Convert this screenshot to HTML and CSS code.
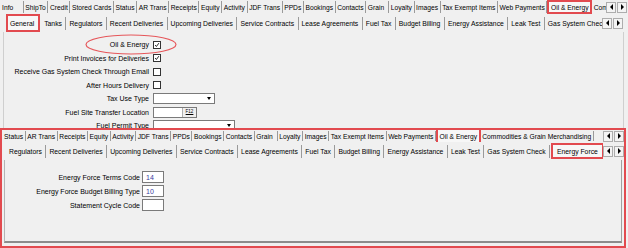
FILE: index.html
```html
<!DOCTYPE html>
<html lang="en">
<head>
    <meta charset="UTF-8">
    <title>Oil &amp; Energy</title>
    <link rel="stylesheet" href="styles.css">
</head>
<body>
    <div class="shot shot-top">
        <div class="strip strip-main">
            <div class="tabs">
                <span class="tab tab-info">Info</span>
                <span class="tab">ShipTo</span>
                <span class="tab">Credit</span>
                <span class="tab">Stored Cards</span>
                <span class="tab">Status</span>
                <span class="tab">AR Trans</span>
                <span class="tab">Receipts</span>
                <span class="tab">Equity</span>
                <span class="tab">Activity</span>
                <span class="tab">JDF Trans</span>
                <span class="tab">PPDs</span>
                <span class="tab">Bookings</span>
                <span class="tab">Contacts</span>
                <span class="tab tab-wide">Grain</span>
                <span class="tab">Loyalty</span>
                <span class="tab">Images</span>
                <span class="tab">Tax Exempt Items</span>
                <span class="tab">Web Payments</span>
                <span class="tab is-marked">Oil &amp; Energy</span>
                <span class="tab">Commodities &amp; Grain Merchandising</span>
            </div>
            <div class="arrows"><span class="arrow arrow-left"></span><span class="arrow arrow-right"></span></div>
        </div>
        <div class="strip strip-sub">
            <div class="tabs">
                <span class="tab is-marked">General</span>
                <span class="tab">Tanks</span>
                <span class="tab">Regulators</span>
                <span class="tab">Recent Deliveries</span>
                <span class="tab">Upcoming Deliveries</span>
                <span class="tab">Service Contracts</span>
                <span class="tab">Lease Agreements</span>
                <span class="tab">Fuel Tax</span>
                <span class="tab">Budget Billing</span>
                <span class="tab">Energy Assistance</span>
                <span class="tab">Leak Test</span>
                <span class="tab">Gas System Check</span>
                <span class="tab">Energy Force</span>
            </div>
            <div class="arrows"><span class="arrow arrow-left"></span><span class="arrow arrow-right"></span></div>
        </div>
        <div class="page page-general">
            <div class="form form-general">
                <label>Oil &amp; Energy</label>
                <span class="check"><svg viewBox="0 0 8 8"><polyline points="1.5,4 3.2,6 6.5,1.5"/></svg></span>
                <label>Print Invoices for Deliveries</label>
                <span class="check"><svg viewBox="0 0 8 8"><polyline points="1.5,4 3.2,6 6.5,1.5"/></svg></span>
                <label>Receive Gas System Check Through Email</label>
                <span class="check"></span>
                <label>After Hours Delivery</label>
                <span class="check"></span>
                <label>Tax Use Type</label>
                <span class="combo combo-short"><span class="drop"></span></span>
                <label>Fuel Site Transfer Location</label>
                <span class="lookup"><span class="key">F12</span></span>
                <label>Fuel Permit Type</label>
                <span class="combo combo-long"><span class="drop"></span></span>
            </div>
        </div>
        <svg class="ring" viewBox="0 0 628 128"><ellipse cx="131" cy="44.5" rx="45" ry="9.5"/></svg>
    </div>

    <div class="shot shot-bottom">
        <div class="strip strip-main">
            <div class="tabs">
                <span class="tab">Status</span>
                <span class="tab">AR Trans</span>
                <span class="tab">Receipts</span>
                <span class="tab">Equity</span>
                <span class="tab">Activity</span>
                <span class="tab">JDF Trans</span>
                <span class="tab">PPDs</span>
                <span class="tab">Bookings</span>
                <span class="tab">Contacts</span>
                <span class="tab tab-wide">Grain</span>
                <span class="tab">Loyalty</span>
                <span class="tab">Images</span>
                <span class="tab">Tax Exempt Items</span>
                <span class="tab">Web Payments</span>
                <span class="tab is-marked">Oil &amp; Energy</span>
                <span class="tab">Commodities &amp; Grain Merchandising</span>
            </div>
            <div class="arrows"><span class="arrow arrow-left"></span><span class="arrow arrow-right"></span></div>
        </div>
        <div class="strip strip-sub">
            <div class="tabs">
                <span class="tab">Regulators</span>
                <span class="tab">Recent Deliveries</span>
                <span class="tab">Upcoming Deliveries</span>
                <span class="tab">Service Contracts</span>
                <span class="tab">Lease Agreements</span>
                <span class="tab">Fuel Tax</span>
                <span class="tab">Budget Billing</span>
                <span class="tab">Energy Assistance</span>
                <span class="tab">Leak Test</span>
                <span class="tab">Gas System Check</span>
                <span class="tab is-marked">Energy Force</span>
            </div>
            <div class="arrows"><span class="arrow arrow-left"></span><span class="arrow arrow-right"></span></div>
        </div>
        <div class="page page-force">
            <div class="form form-force">
                <label>Energy Force Terms Code</label>
                <span class="field">14</span>
                <label>Energy Force Budget Billing Type</label>
                <span class="field">10</span>
                <label>Statement Cycle Code</label>
                <span class="field"></span>
            </div>
        </div>
    </div>
</body>
</html>
```

FILE: styles.css
```css
body {
    margin: 0;
    width: 628px;
    height: 248px;
    overflow: hidden;
    background: #f0f0f0;
    font-family: "Liberation Sans", Arial, sans-serif;
    font-size: 6.8px;
    color: #000;
}

.shot-top {
    position: relative;
    height: 128px;
    overflow: hidden;
}

.shot-bottom {
    width: 626px;
    height: 120px;
    box-sizing: border-box;
    border: 2px solid #e24a4f;
    display: flex;
    flex-direction: column;
}

/* tab strips */
.strip {
    display: flex;
}

.tabs {
    flex: 1;
    display: flex;
    overflow: hidden;
    white-space: nowrap;
}

.tab {
    display: flex;
    align-items: center;
    flex-shrink: 0;
    border-right: 1px solid #9a9a9a;
}

.strip-main .tab {
    font-size: 6.7px;
    padding: 0 1.6px;
    margin: 1px 0;
}

.strip-sub .tab {
    padding: 0 3.5px 0 3px;
    margin: 3px 0 2px;
}

.tab-info {
    min-width: 19px;
}

.tab-wide {
    padding-right: 4px !important;
}

.tab.is-marked {
    border: 2px solid #e24a4f;
    background: #f7f7f7;
    margin: 0 !important;
}

.shot-top .strip-main {
    height: 14px;
}

.shot-top .strip-main .tabs {
    padding-left: 0.5px;
}

.shot-top .strip-main .arrows {
    padding-right: 1px;
}

.shot-top .strip-sub {
    height: 18px;
    padding-left: 6px;
}

.shot-top .strip-sub .arrows {
    padding-right: 5px;
}

.shot-top .strip-sub .tab.is-marked {
    padding: 0 4px 0 2px;
    margin-right: 1px !important;
}

.shot-bottom .strip-main {
    height: 12px;
}

.shot-bottom .strip-main .tabs {
    padding-left: 0.5px;
}

.shot-bottom .strip-main .tab.is-marked {
    margin-top: -2px !important;
    height: 12px;
}

.shot-bottom .strip-sub {
    height: 18px;
    padding-left: 4px;
}

.shot-bottom .strip-sub .tab.is-marked {
    margin: 1px 0 1px 1px !important;
    padding: 0 4px;
}

/* scroll arrows */
.arrows {
    display: flex;
    align-items: center;
    gap: 1px;
}

.arrow {
    width: 8px;
    height: 9px;
    border: 1px solid #adadad;
    background: #f4f4f4;
    display: flex;
    align-items: center;
    justify-content: center;
}

.arrow::before {
    content: "";
    border-top: 3px solid transparent;
    border-bottom: 3px solid transparent;
}

.arrow-left::before {
    border-right: 3px solid #000;
}

.arrow-right::before {
    border-left: 3px solid #000;
}

/* pages */
.page-general {
    height: 97px;
    margin: 0 4px 0 3px;
    border-left: 1px solid #cfcfcf;
    border-right: 1px solid #cfcfcf;
    padding-top: 6px;
    box-sizing: border-box;
}

.page-force {
    flex: 1;
    margin: 0 2px 3px 2px;
    border-left: 1px solid #b4b4b4;
    border-right: 1px solid #a0a0a0;
    border-bottom: 2px solid #8c8c8c;
    padding-top: 10px;
}

.form {
    display: grid;
    align-items: center;
}

.form label {
    text-align: right;
    font-size: 7px;
    white-space: nowrap;
}

.form-general {
    grid-template-columns: 145px 90px;
    grid-auto-rows: 13.5px;
    column-gap: 4px;
}

.form-force {
    grid-template-columns: 135px 22px;
    grid-auto-rows: 14px;
    column-gap: 2px;
}

/* controls */
.check {
    width: 8px;
    height: 8px;
    box-sizing: border-box;
    border: 1px solid #333;
    background: #fff;
    display: block;
}

.check svg {
    display: block;
    width: 6px;
    height: 6px;
    fill: none;
    stroke: #000;
    stroke-width: 1.1;
}

.combo,
.lookup,
.field {
    height: 11px;
    box-sizing: border-box;
    border: 1px solid #7a7a7a;
    background: #fff;
    display: flex;
    justify-content: flex-end;
}

.combo-short {
    width: 62px;
}

.combo-long {
    width: 82px;
}

.drop {
    width: 11px;
    display: flex;
    align-items: center;
    justify-content: center;
}

.drop::before {
    content: "";
    border-left: 2.5px solid transparent;
    border-right: 2.5px solid transparent;
    border-top: 3px solid #000;
}

.lookup {
    width: 44px;
}

.key {
    width: 13px;
    background: #f0f0f0;
    border-left: 1px solid #b0b0b0;
    font-size: 4.5px;
    text-align: center;
    line-height: 7px;
    text-decoration: underline;
}

.field {
    height: 12px;
    justify-content: flex-start;
    align-items: center;
    padding-left: 3px;
    font-size: 7px;
    color: #3a3aa0;
}

/* annotation ring */
.ring {
    position: absolute;
    left: 0;
    top: 0;
    width: 628px;
    height: 128px;
    pointer-events: none;
}

.ring ellipse {
    fill: none;
    stroke: #e6575b;
    stroke-width: 1.2;
}
```
